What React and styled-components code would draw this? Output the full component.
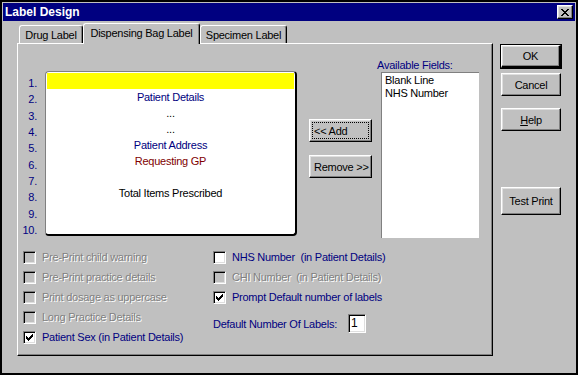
import styled, { createGlobalStyle } from "styled-components";

const GlobalStyle = createGlobalStyle`
  body {
    margin: 0;
    background: #c0c0c0;
    font-family: "Liberation Sans", Arial, sans-serif;
    font-size: 11px;
    letter-spacing: -0.25px;
  }
`;

// 3D edges, win95 style
const raised = `
  border-top: 1px solid #fff;
  border-left: 1px solid #fff;
  border-right: 1px solid #000;
  border-bottom: 1px solid #000;
  box-shadow: inset -1px -1px #808080, inset 1px 1px #dfdfdf;
`;

const sunken = `
  border-top: 1px solid #808080;
  border-left: 1px solid #808080;
  border-right: 1px solid #fff;
  border-bottom: 1px solid #fff;
  box-shadow: inset 1px 1px #000, inset -1px -1px #dfdfdf;
`;

const Window = styled.div`
  width: 578px;
  height: 375px;
  box-sizing: border-box;
  border: 2px solid #000;
  padding: 1px;
  background: #c0c0c0;
`;

const TitleBar = styled.div`
  height: 18px;
  background: #000080;
  display: flex;
  align-items: center;
  justify-content: space-between;
  padding: 0 2px;
`;

const Title = styled.span`
  color: #fff;
  font-weight: bold;
  font-size: 12px;
  letter-spacing: 0;
`;

const CloseButton = styled.div`
  width: 16px;
  height: 14px;
  box-sizing: border-box;
  background: #c0c0c0;
  ${raised}
  display: flex;
  align-items: center;
  justify-content: center;
`;

const Body = styled.div`
  display: flex;
  padding: 2px 0 0 14px;
`;

const TabControl = styled.div`
  width: 476px;
  display: flex;
  flex-direction: column;
`;

const TabStrip = styled.div`
  height: 20px;
  display: flex;
  align-items: flex-end;
  padding-left: 2px;
`;

const Tab = styled.div`
  width: ${(p) => p.$width}px;
  height: ${(p) => (p.$active ? 21 : 18)}px;
  margin-bottom: ${(p) => (p.$active ? -1 : 0)}px;
  box-sizing: border-box;
  position: relative;
  z-index: ${(p) => (p.$active ? 1 : 0)};
  background: #c0c0c0;
  border-top: 1px solid #fff;
  border-left: 1px solid #fff;
  border-right: 1px solid #000;
  border-radius: 3px 3px 0 0;
  box-shadow: inset -1px 0 #808080;
  display: flex;
  align-items: center;
  justify-content: center;
  padding-bottom: ${(p) => (p.$active ? 3 : 0)}px;
`;

const Panel = styled.div`
  height: 313px;
  box-sizing: border-box;
  border-top: 1px solid #fff;
  border-left: 1px solid #fff;
  border-right: 1px solid #000;
  border-bottom: 1px solid #000;
  box-shadow: inset -1px -1px #808080;
  padding-top: 15px;
`;

const TopRow = styled.div`
  display: flex;
  align-items: flex-start;
`;

const NumberCol = styled.div`
  width: 19px;
  margin-top: 16px;
  text-align: right;
  color: #000080;
`;

const Number = styled.div`
  height: 16.33px;
  line-height: 16.33px;
`;

const LabelBox = styled.div`
  margin: 12px 0 0 8px;
  width: 252px;
  height: 165px;
  box-sizing: border-box;
  padding: 1px;
  background: #fff;
  border-top: 1px solid #808080;
  border-left: 1px solid #808080;
  border-right: 2px solid #000;
  border-bottom: 2px solid #000;
  border-radius: 4px;
`;

const LabelLine = styled.div`
  height: 16px;
  line-height: 16px;
  text-align: center;
  color: ${(p) => p.$color || "#000"};
  background: ${(p) => (p.$selected ? "#ffff00" : "transparent")};
`;

const ButtonStack = styled.div`
  margin: 60px 0 0 12px;
  width: 63px;
  display: flex;
  flex-direction: column;
  gap: 13px;
`;

const Button = styled.div`
  position: relative;
  box-sizing: border-box;
  width: ${(p) => p.$width || 60}px;
  height: ${(p) => p.$height || 23}px;
  margin-top: ${(p) => p.$gap || 0}px;
  background: #c0c0c0;
  ${raised}
  ${(p) => p.$default && "outline: 1px solid #000; outline-offset: 0; border-right-width: 2px; border-bottom-width: 2px;"}
  display: flex;
  align-items: center;
  justify-content: ${(p) => (p.$left ? "flex-start" : "center")};
  padding-left: ${(p) => (p.$left ? 4 : 0)}px;
  color: #000;
`;

const FocusRing = styled.span`
  position: absolute;
  inset: 2px 2px 2px 2px;
  border: 1px dotted #000;
`;

const FieldsCol = styled.div`
  margin-left: 5px;
  display: flex;
  flex-direction: column;
`;

const FieldsLabel = styled.div`
  height: 13px;
  line-height: 13px;
  color: #000080;
`;

const ListBox = styled.div`
  margin-left: 4px;
  width: 98px;
  height: 166px;
  box-sizing: border-box;
  background: #fff;
  border-top: 1px solid #808080;
  border-left: 1px solid #808080;
  padding: 1px 0 0 3px;
`;

const ListItem = styled.div`
  line-height: 13px;
  color: #000;
`;

const OptionsRow = styled.div`
  display: flex;
  margin-top: 9px;
  padding-left: 5px;
`;

const OptionsCol = styled.div`
  width: ${(p) => p.$width}px;
  display: flex;
  flex-direction: column;
`;

const CheckRow = styled.div`
  height: 20px;
  display: flex;
  align-items: center;
  gap: 6px;
  white-space: pre;
  color: ${(p) => (p.$disabled ? "#808080" : "#000080")};
  text-shadow: ${(p) => (p.$disabled ? "1px 1px 0 #fff" : "none")};
`;

const Box = styled.span`
  width: 13px;
  height: 13px;
  box-sizing: border-box;
  flex: none;
  ${sunken}
  background: ${(p) => (p.$disabled ? "#c0c0c0" : "#fff")};
  display: flex;
  align-items: center;
  justify-content: center;
`;

const DefaultRow = styled.div`
  margin-top: 7px;
  height: 19px;
  display: flex;
  align-items: center;
  gap: 11px;
  color: #000080;
`;

const NumberInput = styled.div`
  width: 18px;
  height: 19px;
  box-sizing: border-box;
  ${sunken}
  background: #fff;
  color: #000;
  padding-left: 2px;
  line-height: 17px;
  font-size: 12px;
`;

const ButtonColumn = styled.div`
  margin: 22px 0 0 8px;
  display: flex;
  flex-direction: column;
`;

const Check = () => (
  <svg width="7" height="7" viewBox="0 0 7 7" shapeRendering="crispEdges">
    <path
      d="M6 0h1v3h-1v1h-1v1h-1v1h-1v1h-1v-1h-1v-1h-1v-3h1v1h1v1h1v-1h1v-1h1z"
      fill="#000"
    />
  </svg>
);

const CheckOption = ({ label, checked, disabled }) => (
  <CheckRow $disabled={disabled}>
    <Box $disabled={disabled}>{checked && <Check />}</Box>
    {label}
  </CheckRow>
);

const lines = [
  { text: "", selected: true },
  { text: "Patient Details", color: "#000080" },
  { text: "..." },
  { text: "..." },
  { text: "Patient Address", color: "#000080" },
  { text: "Requesting GP", color: "#800000" },
  { text: "" },
  { text: "Total Items Prescribed" },
];

const App = () => {
  return (
    <>
      <GlobalStyle />
      <Window>
        <TitleBar>
          <Title>Label Design</Title>
          <CloseButton>
            <svg width="8" height="7" viewBox="0 0 8 7" shapeRendering="crispEdges">
              <path
                d="M0 0h2v1h1v1h2v-1h1v-1h2v1h-1v1h-1v1h-1v1h1v1h1v1h1v1h-2v-1h-1v-1h-2v1h-1v1h-2v-1h1v-1h1v-1h1v-1h-1v-1h-1v-1h-1z"
                fill="#000"
              />
            </svg>
          </CloseButton>
        </TitleBar>

        <Body>
          <TabControl>
            <TabStrip>
              <Tab $width={64}>Drug Label</Tab>
              <Tab $width={117} $active>
                Dispensing Bag Label
              </Tab>
              <Tab $width={87}>Specimen Label</Tab>
            </TabStrip>

            <Panel>
              <TopRow>
                <NumberCol>
                  {[1, 2, 3, 4, 5, 6, 7, 8, 9, 10].map((n) => (
                    <Number key={n}>{n}.</Number>
                  ))}
                </NumberCol>

                <LabelBox>
                  {lines.map((l, i) => (
                    <LabelLine key={i} $color={l.color} $selected={l.selected}>
                      {l.text}
                    </LabelLine>
                  ))}
                </LabelBox>

                <ButtonStack>
                  <Button $width={63} $left>
                    <FocusRing />
                    &lt;&lt; Add
                  </Button>
                  <Button $width={63} $left>
                    Remove &gt;&gt;
                  </Button>
                </ButtonStack>

                <FieldsCol>
                  <FieldsLabel>Available Fields:</FieldsLabel>
                  <ListBox>
                    <ListItem>Blank Line</ListItem>
                    <ListItem>NHS Number</ListItem>
                  </ListBox>
                </FieldsCol>
              </TopRow>

              <OptionsRow>
                <OptionsCol $width={190}>
                  <CheckOption label="Pre-Print child warning" disabled />
                  <CheckOption label="Pre-Print practice details" disabled />
                  <CheckOption label="Print dosage as uppercase" disabled />
                  <CheckOption label="Long Practice Details" disabled />
                  <CheckOption label="Patient Sex (in Patient Details)" checked />
                </OptionsCol>
                <OptionsCol $width={260}>
                  <CheckOption label="NHS Number  (in Patient Details)" />
                  <CheckOption label="CHI Number  (in Patient Details)" disabled />
                  <CheckOption label="Prompt Default number of labels" checked />
                  <DefaultRow>
                    Default Number Of Labels:
                    <NumberInput>1</NumberInput>
                  </DefaultRow>
                </OptionsCol>
              </OptionsRow>
            </Panel>
          </TabControl>

          <ButtonColumn>
            <Button $default>OK</Button>
            <Button $gap={5}>Cancel</Button>
            <Button $gap={12}>
              <span>
                <u>H</u>elp
              </span>
            </Button>
            <Button $gap={56} $height={28}>
              Test Print
            </Button>
          </ButtonColumn>
        </Body>
      </Window>
    </>
  );
};

export default App;
